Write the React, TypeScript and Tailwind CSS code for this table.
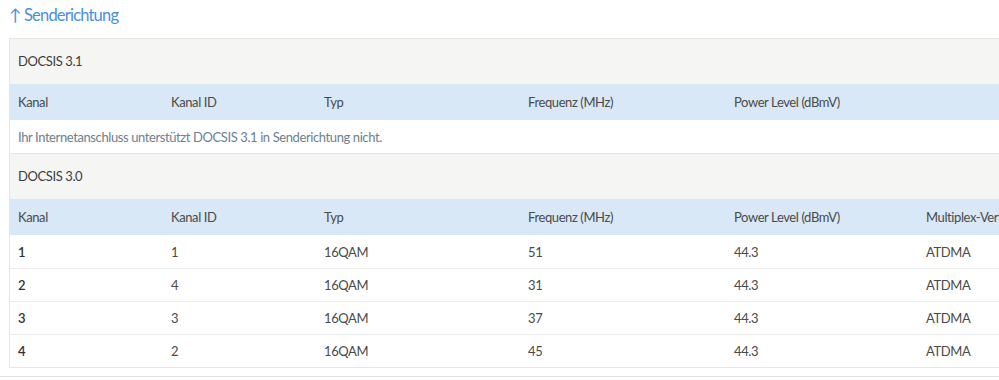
const cols = ['w-[153px]', 'w-[153px]', 'w-[204px]', 'w-[206px]', 'w-[192px]', 'w-[200px]'];

const head31 = ['Kanal', 'Kanal ID', 'Typ', 'Frequenz (MHz)', 'Power Level (dBmV)', ''];
const head30 = ['Kanal', 'Kanal ID', 'Typ', 'Frequenz (MHz)', 'Power Level (dBmV)', 'Multiplex-Verfahren'];

const rows = [
    ['1', '1', '16QAM', '51', '44.3', 'ATDMA'],
    ['2', '4', '16QAM', '31', '44.3', 'ATDMA'],
    ['3', '3', '16QAM', '37', '44.3', 'ATDMA'],
    ['4', '2', '16QAM', '45', '44.3', 'ATDMA'],
];

const HeadRow = ({ cells }: { cells: string[] }) => (
    <div className="flex h-[36px] items-center pt-[2px] bg-[#d8e8f6] text-[#4a4a4a]">
        {cells.map((c, i) => (
            <div key={i} className={`${cols[i]} shrink-0 pl-[8px] whitespace-nowrap`}>{c}</div>
        ))}
    </div>
);

const Section = ({ title }: { title: string }) => (
    <div className="flex h-[46px] items-center pt-[1px] bg-[#f5f5f4] border-t border-[#e6e6e6] pl-[8px] text-[#3d3d3d]">
        {title}
    </div>
);

export default function App() {
    return (
        <div
            className="w-[999px] h-[380px] overflow-hidden bg-white text-[13px] tracking-[-0.4px]"
            style={{ fontFamily: 'Lato, "Open Sans", sans-serif' }}
        >
            <div className="h-[38px] pl-[9px] pt-[3px] text-[16.5px] tracking-[-0.8px] text-[#4a8fdb]">↑ Senderichtung</div>
            <div className="ml-[9px] w-[1200px] border-l border-b border-[#e6e6e6]">
                <Section title="DOCSIS 3.1" />
                <HeadRow cells={head31} />
                <div className="flex h-[33px] items-center pt-[2px] pl-[8px] text-[#6d8091] bg-white">
                    Ihr Internetanschluss unterstützt DOCSIS 3.1 in Senderichtung nicht.
                </div>
                <Section title="DOCSIS 3.0" />
                <HeadRow cells={head30} />
                {rows.map((r, ri) => (
                    <div key={ri} className={`flex h-[33px] items-center pt-[2px] text-[#4a4a4a] ${ri > 0 ? 'border-t border-[#ececec]' : ''}`}>
                        {r.map((c, i) => (
                            <div key={i} className={`${cols[i]} shrink-0 pl-[8px] whitespace-nowrap ${i === 0 ? 'font-semibold text-[#333]' : ''}`}>{c}</div>
                        ))}
                    </div>
                ))}
            </div>
            <div className="mt-[8px] border-t border-[#e2e2e2]" />
        </div>
    );
}
